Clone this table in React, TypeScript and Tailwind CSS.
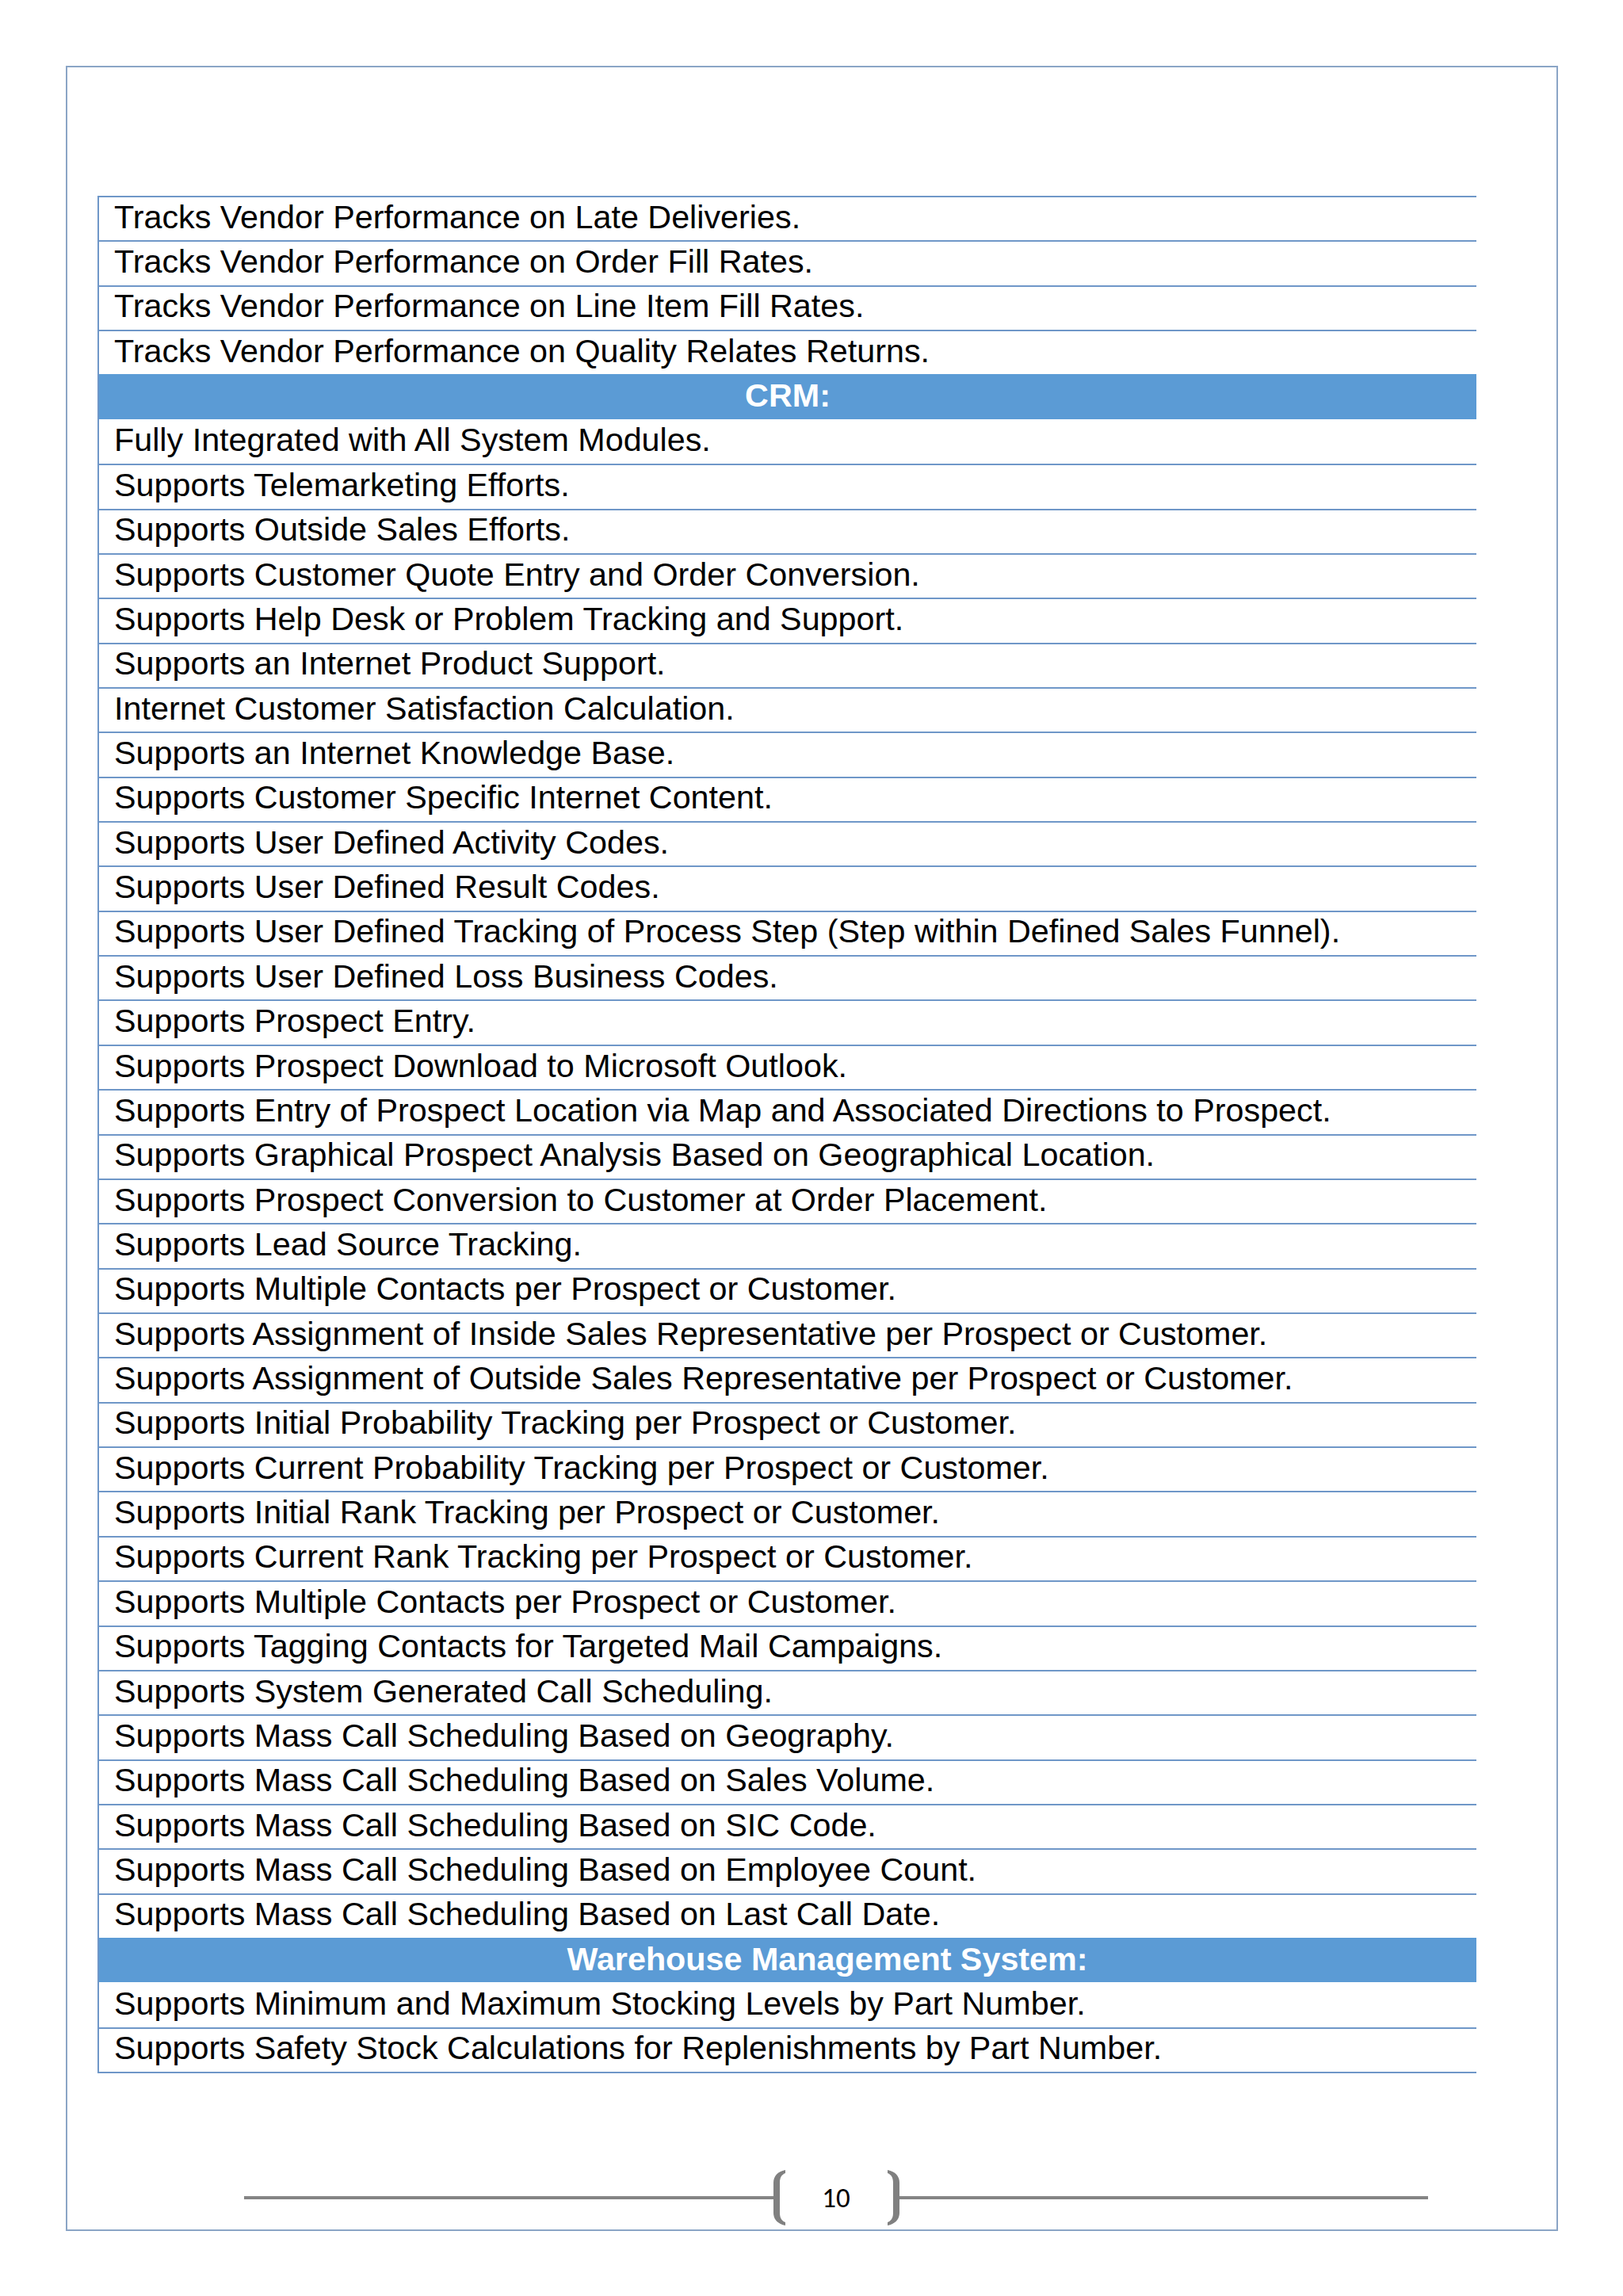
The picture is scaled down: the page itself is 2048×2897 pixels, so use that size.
import clsx from "clsx";

type Row = { text: string; head?: boolean; shift?: boolean };

const rows: Row[] = [
  { text: "Tracks Vendor Performance on Late Deliveries." },
  { text: "Tracks Vendor Performance on Order Fill Rates." },
  { text: "Tracks Vendor Performance on Line Item Fill Rates." },
  { text: "Tracks Vendor Performance on Quality Relates Returns." },
  { text: "CRM:", head: true },
  { text: "Fully Integrated with All System Modules." },
  { text: "Supports Telemarketing Efforts." },
  { text: "Supports Outside Sales Efforts." },
  { text: "Supports Customer Quote Entry and Order Conversion." },
  { text: "Supports Help Desk or Problem Tracking and Support." },
  { text: "Supports an Internet Product Support." },
  { text: "Internet Customer Satisfaction Calculation." },
  { text: "Supports an Internet Knowledge Base." },
  { text: "Supports Customer Specific Internet Content." },
  { text: "Supports User Defined Activity Codes." },
  { text: "Supports User Defined Result Codes." },
  { text: "Supports User Defined Tracking of Process Step (Step within Defined Sales Funnel)." },
  { text: "Supports User Defined Loss Business Codes." },
  { text: "Supports Prospect Entry." },
  { text: "Supports Prospect Download to Microsoft Outlook." },
  { text: "Supports Entry of Prospect Location via Map and Associated Directions to Prospect." },
  { text: "Supports Graphical Prospect Analysis Based on Geographical Location." },
  { text: "Supports Prospect Conversion to Customer at Order Placement." },
  { text: "Supports Lead Source Tracking." },
  { text: "Supports Multiple Contacts per Prospect or Customer." },
  { text: "Supports Assignment of Inside Sales Representative per Prospect or Customer." },
  { text: "Supports Assignment of Outside Sales Representative per Prospect or Customer." },
  { text: "Supports Initial Probability Tracking per Prospect or Customer." },
  { text: "Supports Current Probability Tracking per Prospect or Customer." },
  { text: "Supports Initial Rank Tracking per Prospect or Customer." },
  { text: "Supports Current Rank Tracking per Prospect or Customer." },
  { text: "Supports Multiple Contacts per Prospect or Customer." },
  { text: "Supports Tagging Contacts for Targeted Mail Campaigns." },
  { text: "Supports System Generated Call Scheduling." },
  { text: "Supports Mass Call Scheduling Based on Geography." },
  { text: "Supports Mass Call Scheduling Based on Sales Volume." },
  { text: "Supports Mass Call Scheduling Based on SIC Code." },
  { text: "Supports Mass Call Scheduling Based on Employee Count." },
  { text: "Supports Mass Call Scheduling Based on Last Call Date." },
  { text: "Warehouse Management System:", head: true, shift: true },
  { text: "Supports Minimum and Maximum Stocking Levels by Part Number." },
  { text: "Supports Safety Stock Calculations for Replenishments by Part Number." },
];

const Bracket = ({ flip }: { flip?: boolean }) => (
  <svg width="15" height="70" viewBox="0 0 15 70" className={clsx("shrink-0", flip && "-scale-x-100")}>
    <path
      d="M15 0 C5 2 0 8 0 16 L0 54 C0 62 5 68 15 70 L15 66 C10 64 8 60 8 54 L8 16 C8 10 10 6 15 4 Z"
      fill="#808080"
    />
  </svg>
);

const App = () => {
  return (
    <div className="w-[2048px] h-[2897px] bg-white pt-[83px] pl-[83px]">
      <div className="w-[1883px] h-[2732px] border-2 border-[#8ba5c6] flex flex-col">
        {/* feature table */}
        <div className="ml-[38px] mt-[162px] w-[1740px] border-l-2 border-b-2 border-[#6f97c8] font-['Liberation_Sans',Arial,sans-serif] text-[41.3px] leading-[46px] text-black">
          {rows.map((r, i) => {
            const afterHead = i > 0 && rows[i - 1].head;
            if (r.head) {
              return (
                <div
                  key={i}
                  className={clsx(
                    "h-[56.36px] border-t-2 border-[#5b9bd5] bg-[#5b9bd5] flex items-center justify-center pb-[5px] font-bold text-white",
                    r.shift && "pl-[100px]"
                  )}
                >
                  {r.text}
                </div>
              );
            }
            return (
              <div
                key={i}
                className={clsx(
                  "h-[56.36px] border-t-2 flex items-center pl-[19px] pb-[5px] whitespace-nowrap",
                  afterHead ? "border-white" : "border-[#6f97c8]"
                )}
              >
                {r.text}
              </div>
            );
          })}
        </div>

        {/* page number footer */}
        <div className="mt-auto mb-[5px] ml-[223px] w-[1494px] flex items-center">
          <div className="flex-1 h-[4px] bg-[#858585]" />
          <Bracket />
          <div className="w-[129px] flex justify-center font-['Calibri','Carlito','Open_Sans',sans-serif] text-[35px] leading-none text-black">
            10
          </div>
          <Bracket flip />
          <div className="flex-1 h-[4px] bg-[#858585]" />
        </div>
      </div>
    </div>
  );
};

export default App;
